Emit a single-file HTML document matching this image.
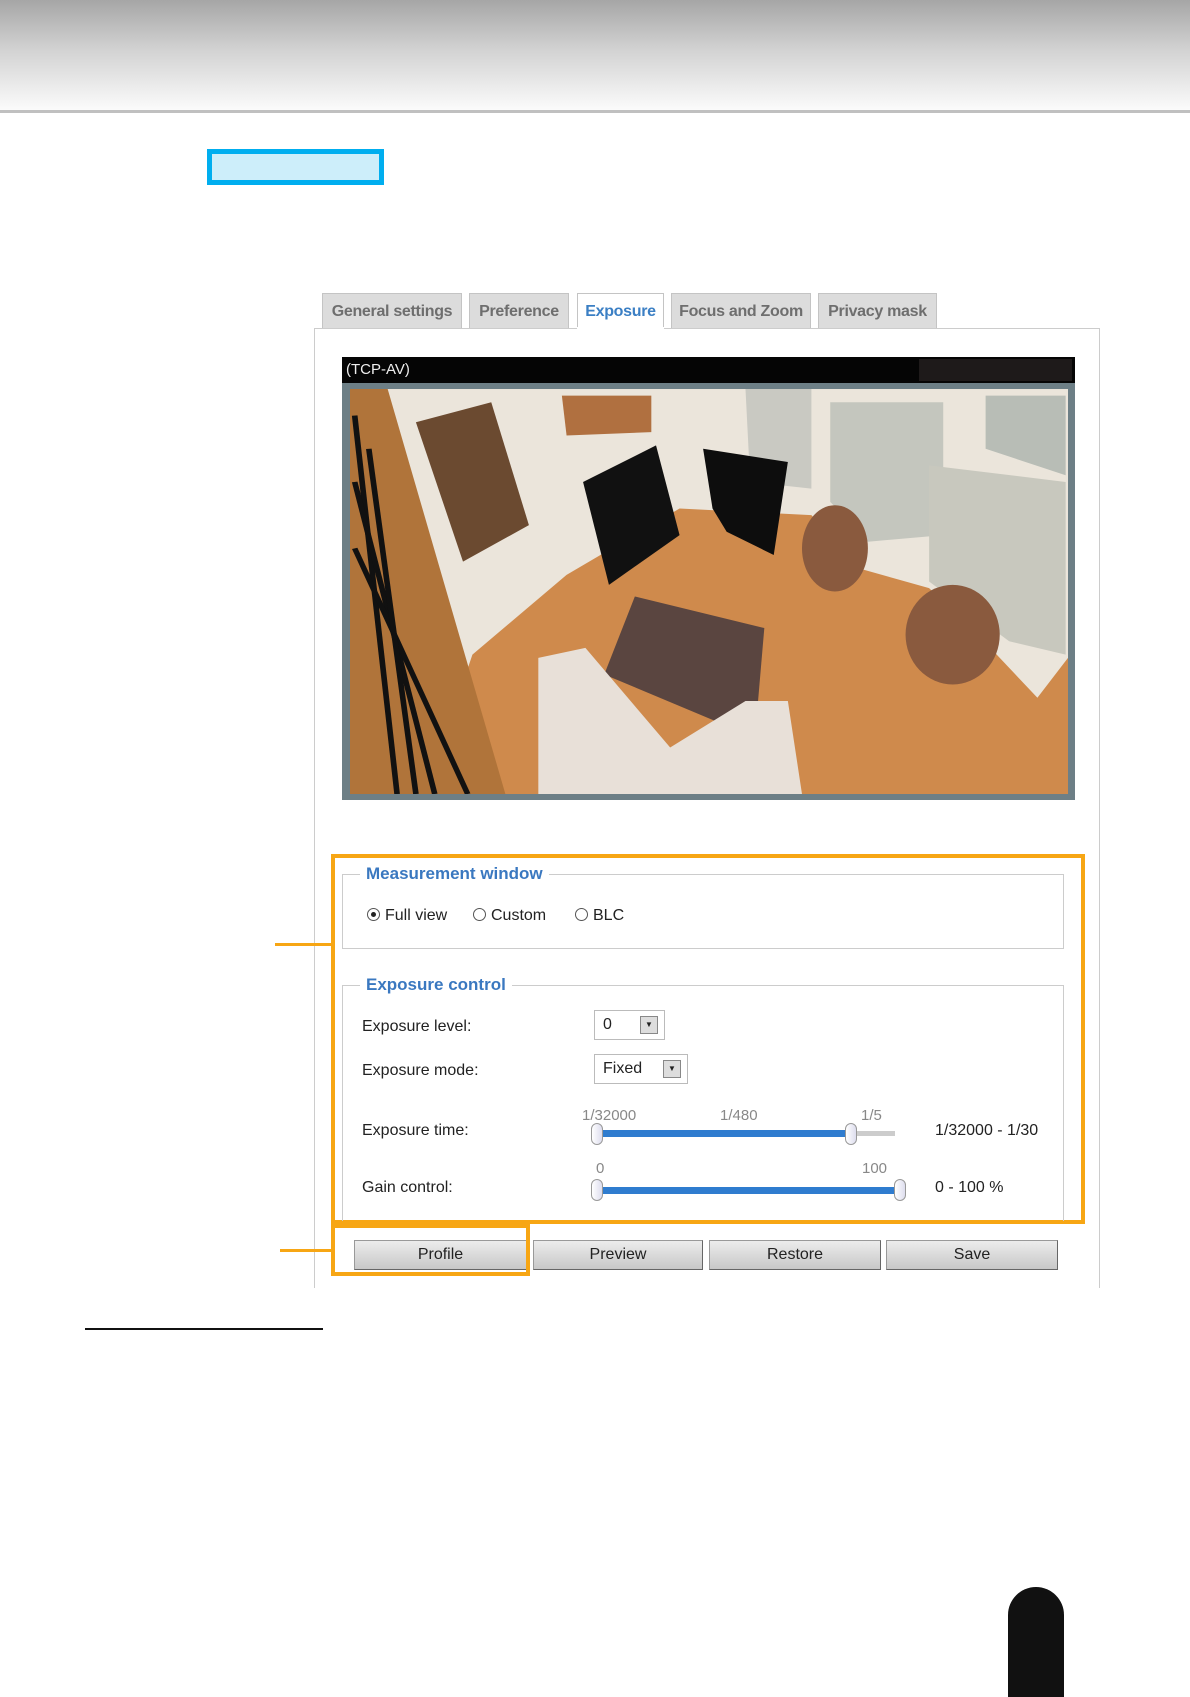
<!DOCTYPE html>
<html><head><meta charset="utf-8"><style>
*{margin:0;padding:0;box-sizing:border-box}
body{width:1190px;height:1684px;position:relative;background:#fff;font-family:"Liberation Sans",sans-serif;overflow:hidden}
.a{position:absolute}
.tab{position:absolute;top:293px;height:36px;background:#dcdcdc;border:1px solid #c4c4c4;border-bottom:none;color:#6e6e6e;font-size:16px;font-weight:bold;text-align:center;line-height:36px;letter-spacing:-0.3px}
.lbl{position:absolute;left:362px;font-size:16px;color:#222}
.sel{position:absolute;left:594px;height:30px;border:1px solid #bbb;background:#fff;font-size:16px;line-height:28px;padding-left:8px;color:#222}
.sel i{position:absolute;right:6px;top:5px;width:18px;height:18px;background:#ddd;border:1px solid #888;font-style:normal;font-size:8px;line-height:16px;text-align:center}
.tick{position:absolute;font-size:15px;color:#888}
.btn{position:absolute;top:1240px;height:30px;background:linear-gradient(#ececec,#c8c8c8);border:1px solid #999;border-right-color:#666;border-bottom-color:#666;font-size:16px;text-align:center;line-height:28px;color:#222}
.knob{position:absolute;width:12px;height:22px;border:1px solid #999;border-radius:6px;background:linear-gradient(90deg,#fff,#dde);}
.rad{display:inline-block;width:13px;height:13px;border:1px solid #555;border-radius:50%;vertical-align:-1px;margin-right:5px;position:relative}
</style></head><body>
<div class="a" style="left:0;top:0;width:1190px;height:110px;background:linear-gradient(#a6a6a6,#d2d2d2 45%,#f0f0f0 85%,#fbfbfb)"></div>
<div class="a" style="left:0;top:110px;width:1190px;height:3px;background:#c0c0c0"></div>
<div class="a" style="left:207px;top:149px;width:177px;height:36px;border:5px solid #00aeef;background:#cdeefa"></div>

<div class="tab" style="left:322px;width:140px">General settings</div>
<div class="tab" style="left:469px;width:100px">Preference</div>
<div class="tab" style="left:577px;width:87px;background:#fff;color:#3b7fc4;height:37px">Exposure</div>
<div class="tab" style="left:671px;width:140px">Focus and Zoom</div>
<div class="tab" style="left:818px;width:119px">Privacy mask</div>
<div class="a" style="left:314px;top:328px;width:786px;height:960px;border:1px solid #ccc;border-bottom:none"></div>
<div class="a" style="left:577px;top:327px;width:87px;height:3px;background:#fff"></div>

<div class="a" style="left:342px;top:357px;width:733px;height:26px;background:#050505;color:#eee;font-size:15px;line-height:26px;padding-left:4px">(TCP-AV)</div>
<div class="a" style="left:919px;top:359px;width:153px;height:22px;background:#1e1a1a"></div>
<div class="a" style="left:342px;top:383px;width:733px;height:417px;background:#6d7f86"></div>
<svg class="a" style="left:350px;top:389px" width="718" height="405" viewBox="20 20 1525 1220" preserveAspectRatio="none">
<rect x="20" y="20" width="1525" height="1220" fill="#cf8a4c"/>
<polygon points="20,20 1545,20 1545,830 1480,950 1380,800 1250,620 1100,560 1000,400 720,380 480,580 280,820 180,1240 20,1240" fill="#ebe5db"/>
<polygon points="860,20 1000,20 1000,320 870,300" fill="#c9c9c2"/>
<polygon points="1040,60 1280,60 1280,460 1120,480 1040,360" fill="#c4c6be"/>
<polygon points="1370,40 1540,40 1540,280 1370,200" fill="#b8bdb6"/>
<polygon points="1250,250 1540,300 1540,820 1420,780 1250,600" fill="#c8c8be"/>
<polygon points="160,120 320,60 400,430 260,540" fill="#6b4a30"/>
<polygon points="470,40 660,40 660,150 480,160" fill="#b07040"/>
<polygon points="515,300 670,190 720,460 570,610" fill="#111"/>
<polygon points="770,200 950,240 920,520 820,450 790,380" fill="#0d0d0d"/>
<ellipse cx="1050" cy="500" rx="70" ry="130" fill="#8a5a3e"/>
<ellipse cx="1300" cy="760" rx="100" ry="150" fill="#8a5a3e"/>
<polygon points="625,645 900,740 880,1070 560,880" fill="#5a4540"/>
<polygon points="20,20 100,20 350,1240 20,1240" fill="#b0743a"/>
<g stroke="#111" stroke-width="12"><line x1="30" y1="100" x2="120" y2="1240"/><line x1="30" y1="300" x2="200" y2="1240"/><line x1="30" y1="500" x2="270" y2="1240"/><line x1="60" y1="200" x2="160" y2="1240"/></g>
<polygon points="420,830 520,800 700,1100 860,960 950,960 980,1240 420,1240" fill="#e8e0d8"/>
</svg>

<div class="a" style="left:331px;top:854px;width:754px;height:370px;border:4px solid #f7a614"></div>
<div class="a" style="left:275px;top:943px;width:56px;height:3px;background:#f7a614"></div>
<div class="a" style="left:342px;top:874px;width:722px;height:75px;border:1px solid #ccc"></div>
<div class="a" style="left:360px;top:864px;padding:0 6px;background:#fff;color:#3a78c0;font-weight:bold;font-size:17px">Measurement window</div>
<div class="a" style="left:367px;top:907px;font-size:16px;color:#222"><span class="rad"><i class="a" style="left:3px;top:3px;width:5px;height:5px;border-radius:50%;background:#222"></i></span>Full view</div>
<div class="a" style="left:473px;top:907px;font-size:16px;color:#222"><span class="rad"></span>Custom</div>
<div class="a" style="left:575px;top:907px;font-size:16px;color:#222"><span class="rad"></span>BLC</div>

<div class="a" style="left:342px;top:985px;width:722px;height:236px;border:1px solid #ccc;border-bottom:none"></div>
<div class="a" style="left:360px;top:975px;padding:0 6px;background:#fff;color:#3a78c0;font-weight:bold;font-size:17px">Exposure control</div>
<div class="lbl" style="top:1018px">Exposure level:</div>
<div class="lbl" style="top:1062px">Exposure mode:</div>
<div class="lbl" style="top:1122px">Exposure time:</div>
<div class="lbl" style="top:1179px">Gain control:</div>
<div class="sel" style="top:1010px;width:71px">0<i>▼</i></div>
<div class="sel" style="top:1054px;width:94px">Fixed<i>▼</i></div>
<div class="tick" style="left:582px;top:1107px">1/32000</div>
<div class="tick" style="left:720px;top:1107px">1/480</div>
<div class="tick" style="left:861px;top:1107px">1/5</div>
<div class="a" style="left:597px;top:1131px;width:298px;height:5px;background:#ccc"></div>
<div class="a" style="left:600px;top:1130px;width:252px;height:7px;background:#2f7ccf"></div>
<div class="knob" style="left:591px;top:1123px"></div>
<div class="knob" style="left:845px;top:1123px"></div>
<div class="lbl" style="left:935px;top:1122px">1/32000 - 1/30</div>
<div class="tick" style="left:596px;top:1160px">0</div>
<div class="tick" style="left:862px;top:1160px">100</div>
<div class="a" style="left:600px;top:1187px;width:298px;height:7px;background:#2f7ccf"></div>
<div class="knob" style="left:591px;top:1179px"></div>
<div class="knob" style="left:894px;top:1179px"></div>
<div class="lbl" style="left:935px;top:1179px">0 - 100 %</div>

<div class="btn" style="left:354px;width:173px">Profile</div>
<div class="btn" style="left:533px;width:170px">Preview</div>
<div class="btn" style="left:709px;width:172px">Restore</div>
<div class="btn" style="left:886px;width:172px">Save</div>
<div class="a" style="left:331px;top:1224px;width:199px;height:52px;border:4px solid #f7a614"></div>
<div class="a" style="left:280px;top:1249px;width:51px;height:3px;background:#f7a614"></div>

<div class="a" style="left:85px;top:1328px;width:238px;height:2px;background:#111"></div>
<div class="a" style="left:1008px;top:1587px;width:56px;height:110px;background:#111;border-radius:28px 28px 0 0"></div>
</body></html>
